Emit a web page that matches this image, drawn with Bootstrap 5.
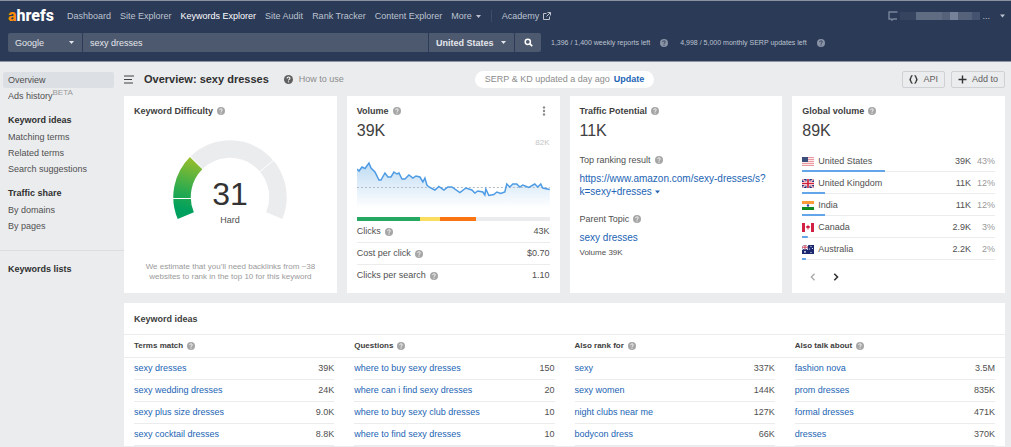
<!DOCTYPE html>
<html lang="en">
<head>
<meta charset="utf-8">
<meta name="viewport" content="width=device-width, initial-scale=1">
<title>Keywords Explorer – Overview</title>
<link href="https://cdn.jsdelivr.net/npm/bootstrap@5.3.0/dist/css/bootstrap.min.css" rel="stylesheet">
<style>
body{font:9px/12px "Liberation Sans",Arial,sans-serif;background:#ebecee;color:#505050}
a{color:#2264b4;text-decoration:none}
button,select,input{font:inherit}
svg{display:block;flex:none}
.topbar{background:#2b3a57;border-top:1px solid #8a929e;border-bottom:1px solid #8e96a6;height:62px;padding:5px 6px 0 8px;color:#bcc3cf}
.topbar a,.plain{color:#bcc3cf;background:none;border:0;padding:0}
.menu-row{height:20px}
.menu-row nav{gap:9px}
.topbar a.on{color:#fff}
.brand{font:800 16px/20px Roboto,sans-serif;color:#fff!important;width:50px}
.brand b{font-weight:800;color:#ff8c0a}
.divide{width:1px;height:12px;background:#3f4c68;margin:0 1px}
.search-row{margin-top:7px}
.searchbox{width:533px;height:19px;gap:1px}
.searchbox>*{background-color:#4d596f;border:0;border-radius:0;color:#e4e7ec;padding:0 7px;height:19px;min-width:0}
.searchbox select{appearance:none;background-repeat:no-repeat;background-position:right 8px center;background-size:5px 3px;background-image:url("data:image/svg+xml,%3Csvg xmlns='http://www.w3.org/2000/svg' viewBox='0 0 10 6'%3E%3Cpath d='M0 0h10L5 6z' fill='%23e4e7ec'/%3E%3C/svg%3E")}
.engine{width:74px;border-radius:2px 0 0 2px!important}
.country{width:85px;font-weight:bold!important}
.go{width:26px;border-radius:0 2px 2px 0!important}
.quota{font-size:7px;gap:10px;margin-left:10px}
.quota svg{opacity:.65}
.quota+.quota{margin-left:12px}
.account{gap:2px}
.pix{width:80px;height:8px;background:linear-gradient(90deg,#36445f 0 16px,#606c82 16px 42px,#566279 42px 50px,#76819a 50px 58px,#566279 58px 72px,#465370 72px)}
.side{width:124px;flex:none;padding:10px 0}
.side a,.side h2{display:block;line-height:16px;padding-left:5px;margin:0 10px 0 3px;color:#505050}
.side h2{font-size:9px;line-height:17px;font-weight:bold;color:#303030;margin-top:8px}
.side .on{background:#dcdfe4;border-radius:2px}
.side sup{font-size:8px;color:#999;top:-4px;line-height:0}
.side hr{margin:16px 0 10px;border-top:1px solid #dcdee1;opacity:1}
main{padding:8px 6px 0 0;min-width:0}
.titlebar{display:grid;grid-template-columns:1fr auto 1fr;align-items:center;height:18px;margin-bottom:8px}
.titlebar h1{font-size:11px;font-weight:bold;margin:0 0 0 10px;color:#303030;line-height:18px}
.howto{color:#8c8c8c}
.howto svg{color:#606060;margin:0 6px 0 15px}
.status{background:#fff;border-radius:9px;height:17px;padding:0 10px;color:#8c8c8c;gap:4px}
.tools{gap:6px}
.tool{height:17px;border:1px solid #cfd1d5;border-radius:2px;background:transparent;color:#606060;padding:0 6px;gap:5px}
.cards{display:grid;grid-template-columns:repeat(4,1fr);gap:10px}
.panel{background:#fff;min-width:0}
.metric{padding:9px 10px 7px;min-height:197px}
.metric h2,.ideas h2{font-size:9px;line-height:12px;font-weight:bold;color:#404040;margin:0}
.hd{display:flex;align-items:center;gap:4px}
.q{color:#a6a6a6}
.big{font-size:16px;line-height:20px;margin:4px 0 0;color:#404040}
.gauge{margin-top:23px}
.note{font-size:8px;line-height:10px;color:#9a9a9a;text-align:center}
.stat{display:flex;justify-content:space-between;line-height:21px;border-bottom:1px solid #ebecee;margin:0}
.stat:last-child{border:0}
.peak{color:#c4c4c4;font-size:8px;line-height:12px;text-align:right;margin-top:-4px}
.split{height:4px;background:#ebecee}
.url{font-size:10px;line-height:13px;display:block}
.sub{margin-top:13px;margin-bottom:6px}
.url+.sub{margin-top:15px}
.small-vol{font-size:8px;margin-top:3px}
table{width:100%;border-collapse:separate;border-spacing:0}
.geo{margin-top:9px}
.geo td{height:22px;padding:0 0 1px}
.geo tr{background:linear-gradient(#62a5e8,#62a5e8) left bottom/var(--share) 2px no-repeat,linear-gradient(#ebecee,#ebecee) left bottom/100% 1px no-repeat}
.geo td:nth-child(2){text-align:right}
.geo td:last-child{text-align:right;color:#9a9a9a;width:24px}
.geo svg{margin-top:2px}
.pager{gap:17px;padding:13px 0 0 8px}
.ideas{margin-top:10px}
.ideas>h2{padding:10px 10px 9px;border-bottom:1px solid #ebecee}
.four{display:grid;grid-template-columns:repeat(4,1fr);gap:20px;padding:0 10px}
.four.heads{height:23px;border-bottom:1px solid #ebecee;align-items:center}
.four.heads h2{font-size:8px}
.four td{height:22px;padding:0 0 2px;border-bottom:1px solid #ebecee}
.four td:last-child{text-align:right}
</style>
</head>
<body>
<svg width="0" height="0" class="position-absolute" aria-hidden="true">
<symbol id="help" viewBox="0 0 16 16"><circle cx="8" cy="8" r="8" fill="currentColor"/><path d="M5.4 6.2c0-3.4 5.4-3.3 5.2-.2C10.500 7.800 8 7.700 8 9.700" fill="none" stroke="var(--q,#fff)" stroke-width="1.800"/><circle cx="8" cy="12.100" r="1.200" fill="var(--q,#fff)"/></symbol>
<symbol id="caret" viewBox="0 0 10 6"><path d="M0 0h10L5 6z" fill="currentColor"/></symbol>
</svg>
<header class="topbar">
<div class="menu-row d-flex align-items-center justify-content-between">
<nav class="d-flex align-items-center" aria-label="Main">
<a class="brand" href="#"><b>a</b>hrefs</a>
<a href="#">Dashboard</a><a href="#">Site Explorer</a><a href="#" class="on">Keywords Explorer</a><a href="#">Site Audit</a><a href="#">Rank Tracker</a><a href="#">Content Explorer</a>
<button class="plain d-flex align-items-center gap-1" type="button">More <svg width="5" height="3"><use href="#caret"/></svg></button>
<span class="divide"></span>
<a href="#" class="d-flex align-items-center gap-1">Academy <svg width="8" height="8" viewBox="0 0 8 8" fill="none" stroke="currentColor"><path d="M3.500 1.500h-3v6h6v-3M4.500.500h3v3M7.500.500l-4 4"/></svg></a>
</nav>
<button class="plain account d-flex align-items-center" type="button" aria-label="Account">
<svg width="10" height="10" viewBox="0 0 10 10" fill="none" stroke="#77849a"><path d="M9.500 1H1v7h2l1 1.200L5 8h4" stroke-width="1.400"/></svg><span class="pix"></span><span>...</span><svg width="5" height="4" class="ms-2"><use href="#caret"/></svg></button>
</div>
<div class="search-row d-flex align-items-center">
<form class="searchbox d-flex" onsubmit="return false">
<select class="engine" aria-label="Search engine"><option>Google</option></select>
<input class="flex-fill" type="text" value="sexy dresses" aria-label="Keyword">
<select class="country" aria-label="Country"><option>United States</option></select>
<button class="go d-flex align-items-center justify-content-center" type="submit" aria-label="Search"><svg width="9" height="9" viewBox="0 0 9 9" fill="none" stroke="#fff"><circle cx="3.800" cy="3.800" r="2.600" stroke-width="1.500"/><path d="M5.700 5.700L8.200 8.200" stroke-width="1.800"/></svg></button>
</form>
<div class="quota d-flex align-items-center">1,396 / 1,400 weekly reports left <svg width="8" height="8" style="--q:#2b3a57"><use href="#help"/></svg></div>
<div class="quota d-flex align-items-center">4,998 / 5,000 monthly SERP updates left <svg width="8" height="8" style="--q:#2b3a57"><use href="#help"/></svg></div>
</div>
</header>
<div class="d-flex">
<aside class="side">
<a href="#" class="on">Overview</a><a href="#">Ads history<sup>BETA</sup></a>
<h2>Keyword ideas</h2><a href="#">Matching terms</a><a href="#">Related terms</a><a href="#">Search suggestions</a>
<h2>Traffic share</h2><a href="#">By domains</a><a href="#">By pages</a>
<hr><h2>Keywords lists</h2>
</aside>
<main class="flex-fill">
<div class="titlebar">
<div class="d-flex align-items-center">
<svg width="10" height="9" viewBox="0 0 10 9" stroke="#404040" stroke-width="1.200"><path d="M0 1h10M0 4.500h8M0 8h9"/></svg>
<h1>Overview: sexy dresses</h1>
<a href="#" class="howto d-flex align-items-center"><svg width="9" height="9"><use href="#help"/></svg><span>How to use</span></a>
</div>
<div class="status d-flex align-items-center"><span>SERP &amp; KD updated a day ago</span><a href="#" class="fw-bold">Update</a></div>
<div class="d-flex tools justify-content-end">
<button class="tool d-flex align-items-center" type="button"><svg width="9" height="9" viewBox="0 0 9 9" fill="none" stroke="#333" stroke-width="1.300"><path d="M3.500.700C1 .700 2.700 4 .600 4.500 2.700 5 1 8.300 3.500 8.300M5.500.700C8 .700 6.300 4 8.400 4.500 6.300 5 8 8.300 5.500 8.300"/></svg>API</button>
<button class="tool d-flex align-items-center" type="button"><svg width="9" height="9" viewBox="0 0 9 9" stroke="#333" stroke-width="1.400"><path d="M4.500.500v8M.500 4.500h8"/></svg>Add to</button>
</div>
</div>
<div class="cards">
<section class="panel metric d-flex flex-column">
<h2 class="hd">Keyword Difficulty <svg class="q" width="8" height="8"><use href="#help"/></svg></h2>
<svg class="gauge mx-auto" width="116" height="86" viewBox="0 0 116 86" role="img" aria-label="Difficulty 31, Hard">
<defs><linearGradient id="kd" gradientUnits="userSpaceOnUse" x1="10" y1="76" x2="25" y2="18"><stop offset=".1" stop-color="#00a05e"/><stop offset=".4" stop-color="#27aa50"/><stop offset="1" stop-color="#9cbf29"/></linearGradient></defs>
<g fill="none" stroke-width="17.500"><path d="M13.800 75.700A48 48 0 0 1 24.100 23.100" stroke="url(#kd)"/><path d="M24.700 22.500A48 48 0 0 1 102.200 75.700" stroke="#ebecee"/></g>
<path d="M0 58.500h20M87 32.500L103 19" stroke="#fff" stroke-width="1"/>
<text x="58" y="65" text-anchor="middle" font-size="32" fill="#333">31</text><text x="58" y="83" text-anchor="middle" font-size="9" fill="#505050">Hard</text>
</svg>
<p class="note mt-auto mb-1">We estimate that you’ll need backlinks from ~38<br>websites to rank in the top 10 for this keyword</p>
</section>
<section class="panel metric">
<div class="d-flex justify-content-between"><h2 class="hd">Volume <svg class="q" width="8" height="8"><use href="#help"/></svg></h2>
<button class="plain" type="button" aria-label="More options"><svg width="12" height="10" viewBox="0 0 12 10" fill="#8c8c8c"><circle cx="6" cy="1.500" r="1.200"/><circle cx="6" cy="5" r="1.200"/><circle cx="6" cy="8.500" r="1.200"/></svg></button></div>
<p class="big">39K</p>
<div class="peak">82K</div>
<svg class="trend" width="100%" height="60" viewBox="0 0 193 60" preserveAspectRatio="none" role="img" aria-label="Volume trend">
<defs><linearGradient id="vol" x1="0" y1="0" x2="0" y2="1"><stop stop-color="#bedbf3"/><stop offset="1" stop-color="#fff"/></linearGradient></defs>
<path d="M0 20L2 22 5 18 8 19.500 12 14 14 19 18 23 22 31 24 31 28 24 31 28 34 28 37 23 40 25 42 24 45 30 48 30 52 26 56 29 59 27 63 28 66 33 68 29 70 36 72 38 78 41 82 37.500 87 41 91 38 95 38 103 43.500 109 39 115 41 118 44 121 42 126 43 128 46 129 40 132 46.500 137 45.500 140 43 144 44.500 148 43 150 35 153 38 156 35 160 35 163 38 166 36 172 38.500 178 35 181 38 184 35 186 39 193 40.500V59H0z" fill="url(#vol)"/>
<path d="M0 38.500H193" stroke="#b3bcc6" stroke-dasharray="2 2" fill="none"/>
<path d="M0 20L2 22 5 18 8 19.500 12 14 14 19 18 23 22 31 24 31 28 24 31 28 34 28 37 23 40 25 42 24 45 30 48 30 52 26 56 29 59 27 63 28 66 33 68 29 70 36 72 38 78 41 82 37.500 87 41 91 38 95 38 103 43.500 109 39 115 41 118 44 121 42 126 43 128 46 129 40 132 46.500 137 45.500 140 43 144 44.500 148 43 150 35 153 38 156 35 160 35 163 38 166 36 172 38.500 178 35 181 38 184 35 186 39 193 40.500" fill="none" stroke="#4d9be4" stroke-width="1.500"/>
</svg>
<div class="split d-flex mt-2"><span style="width:33%;background:#25a862"></span><span style="width:10%;background:#fbdd60"></span><span style="width:19%;background:#fa7414"></span></div>
<p class="stat"><span class="hd">Clicks <svg class="q" width="8" height="8"><use href="#help"/></svg></span><span>43K</span></p>
<p class="stat"><span class="hd">Cost per click <svg class="q" width="8" height="8"><use href="#help"/></svg></span><span>$0.70</span></p>
<p class="stat"><span class="hd">Clicks per search <svg class="q" width="8" height="8"><use href="#help"/></svg></span><span>1.10</span></p>
</section>
<section class="panel metric">
<h2 class="hd">Traffic Potential <svg class="q" width="8" height="8"><use href="#help"/></svg></h2>
<p class="big">11K</p>
<div class="hd sub">Top ranking result <svg class="q" width="8" height="8"><use href="#help"/></svg></div>
<a class="url" href="#">https://www.amazon.com/sexy-dresses/s?<wbr>k=sexy+dresses <svg class="d-inline-block" width="5" height="4"><use href="#caret"/></svg></a>
<div class="hd sub">Parent Topic <svg class="q" width="8" height="8"><use href="#help"/></svg></div>
<a class="url" href="#">sexy dresses</a>
<div class="small-vol">Volume 39K</div>
</section>
<section class="panel metric">
<h2 class="hd">Global volume <svg class="q" width="8" height="8"><use href="#help"/></svg></h2>
<p class="big">89K</p>
<table class="geo">
<tr style="--share:43%"><td><span class="hd"><svg width="12" height="9" viewBox="0 0 12 9"><path fill="#fbe9ea" d="M0 0h12v9H0z"/><path stroke="#e99aa3" d="M0 .500h12M0 2.500h12M0 4.500h12M0 6.500h12M0 8.500h12"/><path fill="#3c4e7c" d="M0 0h6v5H0z"/></svg>United States</span></td><td>39K</td><td>43%</td></tr>
<tr style="--share:12%"><td><span class="hd"><svg width="12" height="9" viewBox="0 0 12 9"><path fill="#1c2f78" d="M0 0h12v9H0z"/><path stroke="#fff" stroke-width="1.600" d="M0 0l12 9M12 0L0 9"/><path stroke="#d2203c" stroke-width=".6" d="M0 0l12 9M12 0L0 9"/><path stroke="#fff" stroke-width="2.800" d="M6 0v9M0 4.500h12"/><path stroke="#d2203c" stroke-width="1.700" d="M6 0v9M0 4.500h12"/></svg>United Kingdom</span></td><td>11K</td><td>12%</td></tr>
<tr style="--share:12%"><td><span class="hd"><svg width="12" height="9" viewBox="0 0 12 9"><path fill="#fff" d="M0 0h12v9H0z"/><path fill="#ff9b38" d="M0 0h12v3H0z"/><path fill="#128820" d="M0 6h12v3H0z"/><circle cx="6" cy="4.500" r="1.200" fill="#3340a0"/></svg>India</span></td><td>11K</td><td>12%</td></tr>
<tr style="--share:3%"><td><span class="hd"><svg width="12" height="9" viewBox="0 0 12 9"><path fill="#fff" d="M0 0h12v9H0z"/><path fill="#d22045" d="M0 0h3v9H0zM9 0h3v9H9zM6 1.500l.7 1.500 1.600.5-1 1.800H6.300V7h-.6V5.300h-1l-1-1.800L5.300 3z"/></svg>Canada</span></td><td>2.9K</td><td>3%</td></tr>
<tr style="--share:2%"><td><span class="hd"><svg width="12" height="9" viewBox="0 0 12 9"><path fill="#1b2870" d="M0 0h12v9H0z"/><path stroke="#fff" stroke-width="1.200" d="M0 0l6 4.500M6 0L0 4.500M3 0v4.500M0 2.200h6"/><path stroke="#d2203c" stroke-width=".8" d="M3 0v4.500M0 2.200h6"/><g fill="#fff"><circle cx="3" cy="6.800" r=".9"/><circle cx="9" cy="1.600" r=".6"/><circle cx="9" cy="7.500" r=".6"/><circle cx="7.600" cy="4" r=".6"/><circle cx="10.500" cy="3.500" r=".6"/></g></svg>Australia</span></td><td>2.2K</td><td>2%</td></tr>
</table>
<div class="pager d-flex">
<button class="plain" type="button" aria-label="Previous"><svg width="6" height="8" viewBox="0 0 6 8" fill="none" stroke="#a8a8a8" stroke-width="1.300"><path d="M4.500.700L1.300 4l3.200 3.300"/></svg></button>
<button class="plain" type="button" aria-label="Next"><svg width="6" height="8" viewBox="0 0 6 8" fill="none" stroke="#333" stroke-width="1.600"><path d="M1.300.700L4.500 4 1.300 7.300"/></svg></button>
</div>
</section>
</div>
<section class="panel ideas">
<h2>Keyword ideas</h2>
<div class="four heads"><h2 class="hd">Terms match <svg class="q" width="8" height="8"><use href="#help"/></svg></h2><h2 class="hd">Questions <svg class="q" width="8" height="8"><use href="#help"/></svg></h2><h2 class="hd">Also rank for <svg class="q" width="8" height="8"><use href="#help"/></svg></h2><h2 class="hd">Also talk about <svg class="q" width="8" height="8"><use href="#help"/></svg></h2></div>
<div class="four">
<table><tr><td><a href="#">sexy dresses</a></td><td>39K</td></tr><tr><td><a href="#">sexy wedding dresses</a></td><td>24K</td></tr><tr><td><a href="#">sexy plus size dresses</a></td><td>9.0K</td></tr><tr><td><a href="#">sexy cocktail dresses</a></td><td>8.8K</td></tr></table>
<table><tr><td><a href="#">where to buy sexy dresses</a></td><td>150</td></tr><tr><td><a href="#">where can i find sexy dresses</a></td><td>20</td></tr><tr><td><a href="#">where to buy sexy club dresses</a></td><td>10</td></tr><tr><td><a href="#">where to find sexy dresses</a></td><td>10</td></tr></table>
<table><tr><td><a href="#">sexy</a></td><td>337K</td></tr><tr><td><a href="#">sexy women</a></td><td>144K</td></tr><tr><td><a href="#">night clubs near me</a></td><td>127K</td></tr><tr><td><a href="#">bodycon dress</a></td><td>66K</td></tr></table>
<table><tr><td><a href="#">fashion nova</a></td><td>3.5M</td></tr><tr><td><a href="#">prom dresses</a></td><td>835K</td></tr><tr><td><a href="#">formal dresses</a></td><td>471K</td></tr><tr><td><a href="#">dresses</a></td><td>370K</td></tr></table>
</div>
</section>
</main>
</div>
<script src="https://cdn.jsdelivr.net/npm/bootstrap@5.3.0/dist/js/bootstrap.bundle.min.js"></script>
</body>
</html>
